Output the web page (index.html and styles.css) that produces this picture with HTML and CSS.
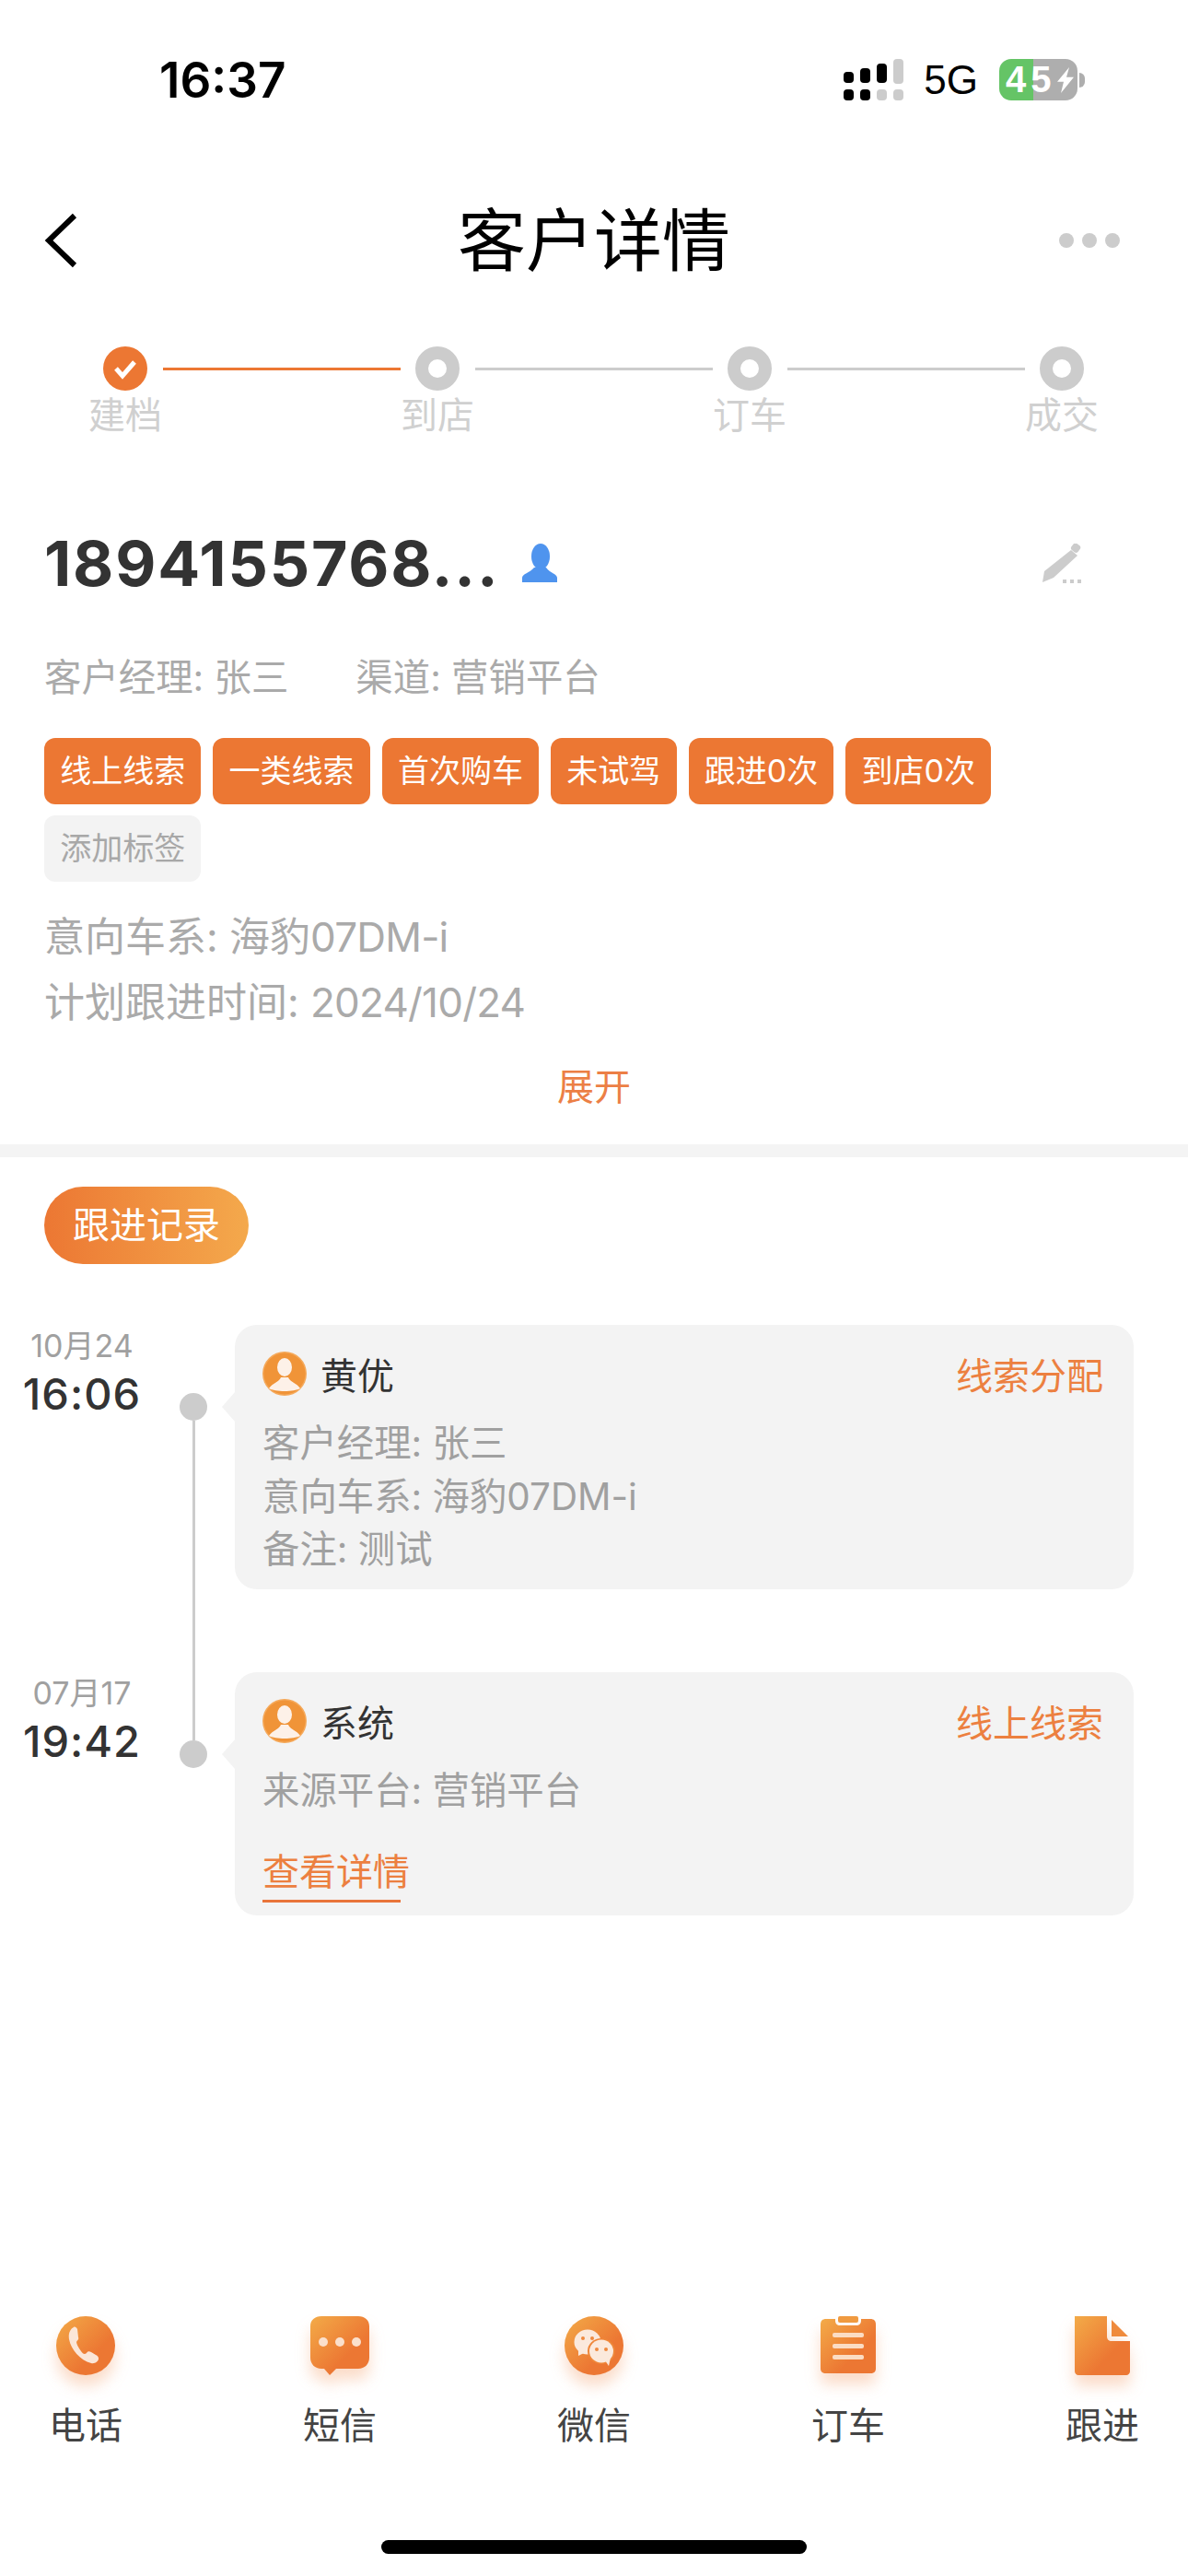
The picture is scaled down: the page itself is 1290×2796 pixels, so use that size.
FILE: index.html
```html
<!DOCTYPE html>
<html>
<head>
  <title>客户详情</title>
  <meta name="viewport" content="width=device-width, initial-scale=1.0">
  <link rel="stylesheet" href="styles.css">
</head>
<body>
  <div class="page">

    <!-- Status bar -->
    <div class="status-bar">
      <span class="status-time">16:37</span>
      <div class="status-right">
        <svg class="signal" width="65" height="45" viewBox="0 0 65 45">
          <rect x="0" y="14" width="11" height="12" rx="4" fill="#000"/>
          <rect x="18" y="10" width="11" height="16" rx="4" fill="#000"/>
          <rect x="36" y="5" width="11" height="21" rx="4" fill="#000"/>
          <rect x="54" y="0" width="11" height="27" rx="4" fill="#ccc"/>
          <rect x="0" y="33" width="11" height="12" rx="4" fill="#000"/>
          <rect x="18" y="33" width="11" height="12" rx="4" fill="#000"/>
          <rect x="36" y="33" width="11" height="12" rx="4" fill="#ccc"/>
          <rect x="54" y="33" width="11" height="12" rx="4" fill="#ccc"/>
        </svg>
        <span class="status-net">5G</span>
        <div class="battery">
          <div class="battery-body">
            <span class="battery-num">45</span>
            <svg width="20" height="28" viewBox="0 0 20 34" preserveAspectRatio="none"><path d="M14 0 L1 19 H8 L5 34 L19 13 H11 Z" fill="#fff"/></svg>
          </div>
          <div class="battery-nub"></div>
        </div>
      </div>
    </div>

    <!-- Nav bar -->
    <div class="nav-bar">
      <svg class="nav-back" width="36" height="60" viewBox="0 0 36 60">
        <polyline points="33,3 5,30 33,57" fill="none" stroke="#000" stroke-width="6"/>
      </svg>
      <div class="nav-title">客户详情</div>
      <div class="nav-more"><i></i><i></i><i></i></div>
    </div>

    <!-- Progress -->
    <div class="steps">
      <div class="step">
        <div class="step-head">
          <svg width="48" height="48" viewBox="0 0 48 48">
            <circle cx="24" cy="24" r="24" fill="#ec7733"/>
            <polyline points="14,24 21,32 34,17" fill="none" stroke="#fff" stroke-width="5"/>
          </svg>
          <div class="step-line done"></div>
        </div>
        <div class="step-label">建档</div>
      </div>
      <div class="step">
        <div class="step-head">
          <div class="step-dot"></div>
          <div class="step-line"></div>
        </div>
        <div class="step-label">到店</div>
      </div>
      <div class="step">
        <div class="step-head">
          <div class="step-dot"></div>
          <div class="step-line"></div>
        </div>
        <div class="step-label">订车</div>
      </div>
      <div class="step last">
        <div class="step-head">
          <div class="step-dot"></div>
        </div>
        <div class="step-label">成交</div>
      </div>
    </div>

    <!-- Customer info -->
    <div class="customer">
      <div class="customer-name">
        <span class="phone">1894155768...</span>
        <svg class="person" width="38" height="42" viewBox="0 0 38 42">
          <ellipse cx="20" cy="14" rx="10" ry="14" fill="#4f94ee"/>
          <path d="M0 42 V37 C0 33 8 32 13 26 H26 C30 32 38 33 38 37 V42 Z" fill="#4f94ee"/>
        </svg>
        <svg class="edit" width="45" height="43" viewBox="0 0 45 43">
          <path d="M33 7 L40 13 L14 37 L2 42 L4 30 Z" fill="#ccc"/>
          <rect x="34" y="0" width="9" height="9" rx="3" transform="rotate(38 38 4)" fill="#ccc"/>
          <rect x="24" y="39" width="4" height="4" fill="#ccc"/>
          <rect x="32" y="39" width="4" height="4" fill="#ccc"/>
          <rect x="40" y="39" width="4" height="4" fill="#ccc"/>
        </svg>
      </div>

      <div class="customer-meta">
        <span>客户经理: 张三</span>
        <span>渠道: 营销平台</span>
      </div>

      <div class="tags">
        <span class="tag">线上线索</span>
        <span class="tag">一类线索</span>
        <span class="tag">首次购车</span>
        <span class="tag">未试驾</span>
        <span class="tag">跟进0次</span>
        <span class="tag">到店0次</span>
        <span class="tag tag-add">添加标签</span>
      </div>

      <div class="customer-line first">意向车系: 海豹<span class="narrow">07DM-i</span></div>
      <div class="customer-line">计划跟进时间: <span class="narrow">2024/10/24</span></div>
      <div class="expand">展开</div>
    </div>

    <div class="divider"></div>

    <!-- Follow-up records -->
    <div class="record-btn">跟进记录</div>

    <div class="log-list">
      <div class="log">
        <div class="log-time">
          <div class="log-date">10月24</div>
          <div class="log-clock">16:06</div>
        </div>
        <div class="log-axis">
          <div class="axis-top"></div>
          <div class="axis-dot"></div>
          <div class="axis-rest line"></div>
        </div>
        <div class="log-card first">
          <div class="log-head">
            <svg width="48" height="48" viewBox="0 0 48 48">
              <circle cx="24" cy="24" r="24" fill="#f5a95a"/>
              <circle cx="24" cy="24" r="22.5" fill="#f09438"/>
              <ellipse cx="24" cy="17" rx="8" ry="10" fill="#fdf1e8"/>
              <path d="M7 40 C11 34 18 33 20 28 H28 C30 33 37 34 41 40 C34 44 14 44 7 40 Z" fill="#fdf1e8"/>
            </svg>
            <span class="log-user">黄优</span>
            <span class="log-type">线索分配</span>
          </div>
          <div class="log-text">客户经理: 张三</div>
          <div class="log-text">意向车系: 海豹07DM-i</div>
          <div class="log-text">备注: 测试</div>
        </div>
      </div>

      <div class="log">
        <div class="log-time">
          <div class="log-date">07月17</div>
          <div class="log-clock">19:42</div>
        </div>
        <div class="log-axis">
          <div class="axis-top line"></div>
          <div class="axis-dot"></div>
          <div class="axis-rest"></div>
        </div>
        <div class="log-card second">
          <div class="log-head">
            <svg width="48" height="48" viewBox="0 0 48 48">
              <circle cx="24" cy="24" r="24" fill="#f5a95a"/>
              <circle cx="24" cy="24" r="22.5" fill="#f09438"/>
              <ellipse cx="24" cy="17" rx="8" ry="10" fill="#fdf1e8"/>
              <path d="M7 40 C11 34 18 33 20 28 H28 C30 33 37 34 41 40 C34 44 14 44 7 40 Z" fill="#fdf1e8"/>
            </svg>
            <span class="log-user">系统</span>
            <span class="log-type">线上线索</span>
          </div>
          <div class="log-text">来源平台: 营销平台</div>
          <div class="log-link">查看详情</div>
          <div class="log-link-line"></div>
        </div>
      </div>
    </div>

    <!-- Bottom actions -->
    <div class="actions">
      <div class="action">
        <svg class="action-icon" width="64" height="64" viewBox="0 0 64 64">
          <defs>
            <linearGradient id="g1" x1="0" y1="0" x2="1" y2="1">
              <stop offset="0" stop-color="#f3ab48"/>
              <stop offset="0.65" stop-color="#ec7733"/>
            </linearGradient>
          </defs>
          <circle cx="32" cy="32" r="32" fill="url(#g1)"/>
          <path d="M19 12 C15 14 13 19 14 25 C16 36 26 48 38 51 C42 52 46 49 46 46 C46 44 45 43 43 42 L38 39 C36 38 34 38 33 40 C31 42 29 41 27 38 C24 34 22 30 22 28 C23 26 25 25 24 23 L23 14 C22 12 20 11 19 12 Z" fill="#fbe6d8"/>
        </svg>
        <span>电话</span>
      </div>
      <div class="action">
        <svg class="action-icon" width="64" height="64" viewBox="0 0 64 64">
          <defs>
            <linearGradient id="g2" x1="0" y1="0" x2="1" y2="1">
              <stop offset="0" stop-color="#f3ab48"/>
              <stop offset="0.65" stop-color="#ec7733"/>
            </linearGradient>
          </defs>
          <path d="M12 0 H52 C59 0 64 4 64 11 V45 C64 52 59 57 52 57 H28 L21 64 L15 57 H12 C5 57 0 52 0 45 V11 C0 4 5 0 12 0 Z" fill="url(#g2)"/>
          <circle cx="14" cy="28" r="5" fill="#fbe0cc"/>
          <circle cx="32" cy="28" r="5" fill="#fbe0cc"/>
          <circle cx="50" cy="28" r="5" fill="#fbe0cc"/>
        </svg>
        <span>短信</span>
      </div>
      <div class="action">
        <svg class="action-icon" width="64" height="64" viewBox="0 0 64 64">
          <defs>
            <linearGradient id="g3" x1="0" y1="0" x2="1" y2="1">
              <stop offset="0" stop-color="#f3ab48"/>
              <stop offset="0.65" stop-color="#ec7733"/>
            </linearGradient>
          </defs>
          <circle cx="32" cy="32" r="32" fill="url(#g3)"/>
          <ellipse cx="25" cy="28" rx="14.5" ry="13.5" fill="#fbe9dc"/>
          <path d="M15 36 L15 43 L23 39 Z" fill="#fbe9dc"/>
          <circle cx="20" cy="24" r="2" fill="#ee8a40"/>
          <circle cx="30" cy="24" r="2" fill="#ee8a40"/>
          <ellipse cx="40" cy="38" rx="15" ry="14" fill="#ef8639"/>
          <ellipse cx="40" cy="38" rx="13" ry="12.5" fill="#fbe9dc"/>
          <path d="M44 48 L48 54 L50 45 Z" fill="#fbe9dc"/>
          <circle cx="35" cy="36" r="2" fill="#ee8a40"/>
          <circle cx="45" cy="36" r="2" fill="#ee8a40"/>
        </svg>
        <span>微信</span>
      </div>
      <div class="action">
        <svg class="action-icon" width="60" height="64" viewBox="0 0 60 64">
          <defs>
            <linearGradient id="g4" x1="0" y1="0" x2="1" y2="1">
              <stop offset="0" stop-color="#f3ab48"/>
              <stop offset="0.65" stop-color="#ec7733"/>
            </linearGradient>
          </defs>
          <path d="M6 3 H16 V5 C16 8 18 10 21 10 H39 C42 10 44 8 44 5 V3 H54 C58 3 60 5 60 9 V57 C60 60 58 62 54 62 H6 C2 62 0 60 0 57 V9 C0 5 2 3 6 3 Z" fill="url(#g4)"/>
          <rect x="19" y="0" width="22" height="7" rx="2" fill="#f09a40"/>
          <rect x="13" y="18" width="34" height="5" rx="2" fill="#fbdcc4"/>
          <rect x="13" y="30" width="34" height="5" rx="2" fill="#fbdcc4"/>
          <rect x="13" y="42" width="34" height="5" rx="2" fill="#fbdcc4"/>
        </svg>
        <span>订车</span>
      </div>
      <div class="action">
        <svg class="action-icon" width="60" height="64" viewBox="0 0 60 64">
          <defs>
            <linearGradient id="g5" x1="0" y1="0" x2="1" y2="1">
              <stop offset="0" stop-color="#f3ab48"/>
              <stop offset="0.65" stop-color="#ec7733"/>
            </linearGradient>
          </defs>
          <path d="M0 0 H35 V22 C35 25 37 27 40 27 H60 V60 C60 62 58 64 56 64 H4 C2 64 0 62 0 60 Z" fill="url(#g5)"/>
          <path d="M40 4 L58 22 H40 Z" fill="#ef8a3c"/>
        </svg>
        <span>跟进</span>
      </div>
    </div>

    <div class="home-bar"></div>
  </div>
</body>
</html>
```

FILE: styles.css
```css
body {
  margin: 0;
  font-family: Inter, "Noto Sans CJK SC", sans-serif;
  background-color: #fff;
}

.page {
  display: flex;
  flex-direction: column;
  width: 1290px;
  height: 2796px;
  overflow: hidden;
}

/* Status bar */
.status-bar {
  display: flex;
  justify-content: space-between;
  align-items: center;
  height: 45px;
  padding: 64px 112px 0 173px;
}

.status-time {
  font-size: 53px;
  font-weight: 600;
  color: #000;
}

.status-right {
  display: flex;
  align-items: center;
}

.status-net {
  margin-left: 22px;
  font-family: "Liberation Sans", sans-serif;
  font-size: 44px;
  color: #000;
}

.battery {
  display: flex;
  align-items: center;
  margin-left: 23px;
}

.battery-body {
  display: flex;
  align-items: center;
  width: 85px;
  height: 45px;
  padding-left: 7px;
  box-sizing: border-box;
  border-radius: 13px;
  background: linear-gradient(to right, #65c466 44%, #aeaeae 44%);
}

.battery-num {
  font-family: "Liberation Sans", sans-serif;
  font-size: 40px;
  font-weight: 700;
  letter-spacing: 5px;
  color: #fff;
}

.battery-nub {
  width: 6px;
  height: 16px;
  margin-left: 2px;
  border-radius: 0 8px 8px 0;
  background-color: #aeaeae;
}

/* Nav bar */
.nav-bar {
  display: grid;
  grid-template-columns: 1fr auto 1fr;
  align-items: center;
  height: 90px;
  margin-top: 106px;
  padding: 0 48px;
}

.nav-title {
  font-size: 74px;
  line-height: 92px;
  color: #000;
}

.nav-more {
  display: flex;
  justify-self: end;
  gap: 9px;
  margin-right: 26px;
}

.nav-more i {
  width: 16px;
  height: 16px;
  border-radius: 50%;
  background-color: #ccc;
}

/* Progress steps */
.steps {
  display: flex;
  margin-top: 71px;
  padding-left: 97px;
}

.step {
  width: 339px;
}

.step.last {
  width: 78px;
}

.step-head {
  display: flex;
  align-items: center;
  height: 48px;
  padding-left: 15px;
}

.step-dot {
  width: 20px;
  height: 20px;
  border: 14px solid #ccc;
  border-radius: 50%;
  background-color: #fff;
}

.step-line {
  width: 258px;
  height: 3px;
  margin-left: 17px;
  background-color: #ccc;
}

.step-line.done {
  background-color: #ec7733;
}

.step-label {
  display: flex;
  justify-content: center;
  width: 78px;
  margin-top: 2px;
  font-size: 40px;
  line-height: 50px;
  white-space: nowrap;
  color: #d0d0d0;
}

/* Customer info */
.customer {
  margin-top: 105px;
  padding: 0 48px;
}

.customer-name {
  display: flex;
  align-items: center;
  height: 60px;
}

.phone {
  width: 510px;
  font-size: 68px;
  font-weight: 700;
  letter-spacing: 1.8px;
  color: #333;
}

.person {
  margin-left: 9px;
}

.edit {
  margin-left: auto;
  margin-right: 67px;
}

.customer-meta {
  display: flex;
  gap: 73px;
  margin-top: 67px;
  font-size: 40.4px;
  line-height: 56px;
  color: #aaa;
}

.tags {
  display: flex;
  flex-wrap: wrap;
  gap: 12px 13px;
  margin-top: 37px;
}

.tag {
  padding: 0 17.2px;
  font-size: 34px;
  line-height: 72px;
  color: #fff;
  border-radius: 12px;
  background-color: #ec7733;
}

.tag-add {
  color: #a8a8a8;
  background-color: #f3f3f3;
}

.customer-line {
  font-size: 44px;
  line-height: 71px;
  color: #aaa;
}

.customer-line.first {
  margin-top: 25px;
}

.narrow {
  letter-spacing: -0.8px;
}

.expand {
  margin-top: 28px;
  font-size: 40px;
  line-height: 56px;
  text-align: center;
  color: #ec7f45;
}

.divider {
  height: 14px;
  margin-top: 34px;
  background-color: #f4f4f4;
}

/* Follow-up records */
.record-btn {
  align-self: flex-start;
  width: 222px;
  margin: 32px 0 0 48px;
  font-size: 40px;
  line-height: 84px;
  text-align: center;
  color: #fff;
  border-radius: 42px;
  background: linear-gradient(to right, #ec7733, #f4a94c);
}

.log-list {
  margin-top: 66px;
}

.log {
  display: flex;
}

.log-time {
  width: 178px;
  text-align: center;
}

.log-date {
  margin-top: 1px;
  font-size: 34px;
  line-height: 44px;
  color: #a0a0a0;
}

.log-clock {
  font-size: 47px;
  line-height: 60px;
  font-weight: 500;
  letter-spacing: 1px;
  color: #333;
}

.log-axis {
  display: flex;
  flex-direction: column;
  align-items: center;
  width: 30px;
  margin-left: 17px;
}

.axis-top {
  width: 3px;
  height: 74px;
}

.axis-rest {
  flex: 1;
  width: 3px;
}

.axis-top.line,
.axis-rest.line {
  background-color: #ccc;
}

.axis-dot {
  flex: none;
  width: 30px;
  height: 30px;
  border-radius: 50%;
  background-color: #ccc;
}

.log-card {
  position: relative;
  width: 976px;
  margin-left: 30px;
  padding: 29px 33px 14px 30px;
  box-sizing: border-box;
  border-radius: 24px;
  background-color: #f3f3f3;
}

.log-card.first {
  margin-bottom: 90px;
}

.log-card::before {
  content: "";
  position: absolute;
  left: -14px;
  top: 73px;
  border-top: 16px solid transparent;
  border-bottom: 16px solid transparent;
  border-right: 14px solid #f3f3f3;
}

.log-head {
  display: flex;
  align-items: center;
  height: 48px;
  margin-bottom: 23px;
}

.log-user {
  margin-left: 15px;
  font-size: 40px;
  color: #333;
}

.log-type {
  margin-left: auto;
  font-size: 40px;
  color: #ec8040;
}

.log-text {
  font-size: 40.4px;
  line-height: 57.5px;
  color: #a0a0a0;
}

.log-link {
  margin-top: 31px;
  font-size: 40px;
  line-height: 58px;
  color: #ec8040;
}

.log-link-line {
  width: 150px;
  height: 3px;
  margin-top: 1px;
  background-color: #e9753a;
}

/* Bottom actions */
.actions {
  display: flex;
  justify-content: space-between;
  margin-top: auto;
  padding: 0 53px;
}

.action {
  display: flex;
  flex-direction: column;
  align-items: center;
  width: 80px;
  font-size: 40px;
  line-height: 56px;
  color: #444;
}

.action-icon {
  margin-bottom: 27px;
  filter: drop-shadow(0 12px 8px rgba(240, 130, 60, 0.28));
}

.home-bar {
  flex: none;
  width: 462px;
  height: 15px;
  margin: 96px auto 24px;
  border-radius: 8px;
  background-color: #000;
}
```
